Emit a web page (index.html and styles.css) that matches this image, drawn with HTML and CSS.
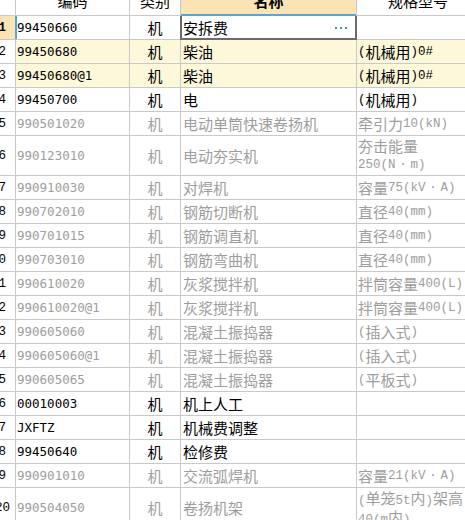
FILE: index.html
```html
<!DOCTYPE html>
<html lang="zh">
<head>
<meta charset="utf-8">
<link rel="stylesheet" href="styles.css">
</head>
<body>
<div class="grid">
  <div class="row head">
    <div class="c num"></div>
    <div class="c code">编码</div>
    <div class="c type">类别</div>
    <div class="c name hot">名称<span class="sort"></span></div>
    <div class="c spec">规格型号</div>
  </div>
  <div class="row cur">
    <div class="c num">1</div>
    <div class="c code">99450660</div>
    <div class="c type">机</div>
    <div class="c name sel">安拆费<svg class="more" width="12" height="3" viewBox="0 0 12 3"><rect x="0" y="0" width="2" height="2"/><rect x="5" y="0" width="2" height="2"/><rect x="10" y="0" width="2" height="2"/></svg></div>
    <div class="c spec"></div>
  </div>
  <div class="row y">
    <div class="c num">2</div>
    <div class="c code">99450680</div>
    <div class="c type">机</div>
    <div class="c name">柴油</div>
    <div class="c spec"><span class="h">(</span>机械用<span class="h">)0#</span></div>
  </div>
  <div class="row y">
    <div class="c num">3</div>
    <div class="c code">99450680@1</div>
    <div class="c type">机</div>
    <div class="c name">柴油</div>
    <div class="c spec"><span class="h">(</span>机械用<span class="h">)0#</span></div>
  </div>
  <div class="row">
    <div class="c num">4</div>
    <div class="c code">99450700</div>
    <div class="c type">机</div>
    <div class="c name">电</div>
    <div class="c spec"><span class="h">(</span>机械用<span class="h">)</span></div>
  </div>
  <div class="row g">
    <div class="c num">5</div>
    <div class="c code">990501020</div>
    <div class="c type">机</div>
    <div class="c name">电动单筒快速卷扬机</div>
    <div class="c spec">牵引力<span class="h">10(kN)</span></div>
  </div>
  <div class="row g tall">
    <div class="c num">6</div>
    <div class="c code">990123010</div>
    <div class="c type">机</div>
    <div class="c name">电动夯实机</div>
    <div class="c spec two">夯击能量<br><span class="h">250(N</span><span class="dot">·</span><span class="h">m)</span></div>
  </div>
  <div class="row g">
    <div class="c num">7</div>
    <div class="c code">990910030</div>
    <div class="c type">机</div>
    <div class="c name">对焊机</div>
    <div class="c spec">容量<span class="h">75(kV</span><span class="dot">·</span><span class="h">A)</span></div>
  </div>
  <div class="row g">
    <div class="c num">8</div>
    <div class="c code">990702010</div>
    <div class="c type">机</div>
    <div class="c name">钢筋切断机</div>
    <div class="c spec">直径<span class="h">40(mm)</span></div>
  </div>
  <div class="row g">
    <div class="c num">9</div>
    <div class="c code">990701015</div>
    <div class="c type">机</div>
    <div class="c name">钢筋调直机</div>
    <div class="c spec">直径<span class="h">40(mm)</span></div>
  </div>
  <div class="row g">
    <div class="c num">10</div>
    <div class="c code">990703010</div>
    <div class="c type">机</div>
    <div class="c name">钢筋弯曲机</div>
    <div class="c spec">直径<span class="h">40(mm)</span></div>
  </div>
  <div class="row g">
    <div class="c num">11</div>
    <div class="c code">990610020</div>
    <div class="c type">机</div>
    <div class="c name">灰浆搅拌机</div>
    <div class="c spec">拌筒容量<span class="h">400(L)</span></div>
  </div>
  <div class="row g">
    <div class="c num">12</div>
    <div class="c code">990610020@1</div>
    <div class="c type">机</div>
    <div class="c name">灰浆搅拌机</div>
    <div class="c spec">拌筒容量<span class="h">400(L)</span></div>
  </div>
  <div class="row g">
    <div class="c num">13</div>
    <div class="c code">990605060</div>
    <div class="c type">机</div>
    <div class="c name">混凝土振捣器</div>
    <div class="c spec"><span class="h">(</span>插入式<span class="h">)</span></div>
  </div>
  <div class="row g">
    <div class="c num">14</div>
    <div class="c code">990605060@1</div>
    <div class="c type">机</div>
    <div class="c name">混凝土振捣器</div>
    <div class="c spec"><span class="h">(</span>插入式<span class="h">)</span></div>
  </div>
  <div class="row g">
    <div class="c num">15</div>
    <div class="c code">990605065</div>
    <div class="c type">机</div>
    <div class="c name">混凝土振捣器</div>
    <div class="c spec"><span class="h">(</span>平板式<span class="h">)</span></div>
  </div>
  <div class="row">
    <div class="c num">16</div>
    <div class="c code">00010003</div>
    <div class="c type">机</div>
    <div class="c name">机上人工</div>
    <div class="c spec"></div>
  </div>
  <div class="row">
    <div class="c num">17</div>
    <div class="c code">JXFTZ</div>
    <div class="c type">机</div>
    <div class="c name">机械费调整</div>
    <div class="c spec"></div>
  </div>
  <div class="row">
    <div class="c num">18</div>
    <div class="c code">99450640</div>
    <div class="c type">机</div>
    <div class="c name">检修费</div>
    <div class="c spec"></div>
  </div>
  <div class="row g">
    <div class="c num">19</div>
    <div class="c code">990901010</div>
    <div class="c type">机</div>
    <div class="c name">交流弧焊机</div>
    <div class="c spec">容量<span class="h">21(kV</span><span class="dot">·</span><span class="h">A)</span></div>
  </div>
  <div class="row g tall">
    <div class="c num wide">20</div>
    <div class="c code">990504050</div>
    <div class="c type">机</div>
    <div class="c name">卷扬机架</div>
    <div class="c spec two"><span class="h">(</span>单笼<span class="h">5t</span>内<span class="h">)</span>架高<br><span class="h">40(m</span>内<span class="h">)</span></div>
  </div>
</div>
</body>
</html>
```

FILE: styles.css
```css
html, body {
  margin: 0;
  padding: 0;
  background: #fff;
  overflow: hidden;
}

.grid {
  display: flex;
  flex-direction: column;
  gap: 1px;
  width: 474px;
  margin: -12px 0 0 -9px;
  background: #c9c9c9;
}

.row {
  display: grid;
  grid-template-columns: 24px 113px 50px 175px 1fr;
  column-gap: 1px;
  height: 23px;
}

.row.tall {
  height: 39px;
}

.row.head {
  height: 27px;
}

.c {
  display: flex;
  align-items: center;
  overflow: hidden;
  white-space: nowrap;
  background: #fff;
  color: #000;
  font-family: "Noto Sans CJK SC", sans-serif;
  font-size: 15px;
  line-height: 18px;
}

.num {
  justify-content: flex-end;
  padding-right: 9px;
  font-family: "Liberation Mono", monospace;
  font-size: 12.5px;
  color: #000;
}

.num.wide {
  padding-right: 5px;
}

.code {
  padding-left: 1px;
  font-family: "DejaVu Sans Mono", monospace;
  font-size: 12.5px;
}

.type {
  justify-content: center;
}

.name {
  padding-left: 2px;
}

.spec {
  padding-left: 1px;
}

.head .c {
  justify-content: center;
  padding-left: 0;
  padding-bottom: 2px;
  font-family: "Noto Sans CJK SC", sans-serif;
  font-size: 15px;
}

.head .spec {
  padding-left: 14px;
}

.head .hot {
  position: relative;
  background: #fbe4b4;
  font-weight: 700;
  box-shadow: 0 1px 0 #4ea7e3, inset 0 -1px 0 #4ea7e3;
}

.sort {
  position: absolute;
  right: 12px;
  top: 10px;
  width: 8px;
  height: 3px;
  border-top: 1px dotted #8a8a8a;
}

.cur .num {
  background: #fbe4b4;
  font-weight: 700;
  box-shadow: 1px 0 0 #4ea7e3;
}

.cur .code {
  box-shadow: inset 1px 0 0 #4ea7e3;
}

.sel {
  position: relative;
  justify-content: space-between;
  padding-right: 9px;
  overflow: visible;
}

.sel::after {
  content: "";
  position: absolute;
  left: -1px;
  right: -1px;
  top: 0;
  bottom: -1px;
  border: 2px solid #6b6b6b;
  border-top: 0;
  pointer-events: none;
}

.more {
  fill: #3d8fd8;
  margin-top: 1px;
}

.y .code,
.y .type,
.y .name,
.y .spec {
  background: #fdf8d9;
}

.g .code,
.g .type,
.g .name,
.g .spec {
  color: #9d9d9d;
}

.h {
  font-family: "Liberation Mono", monospace;
  font-size: 12.5px;
}

.dot {
  display: inline-block;
  width: 15px;
  text-align: center;
  font-family: "Liberation Mono", monospace;
  font-size: 12.5px;
}

.spec.two {
  display: block;
  white-space: normal;
  line-height: 16px;
  padding-top: 2px;
}
```
